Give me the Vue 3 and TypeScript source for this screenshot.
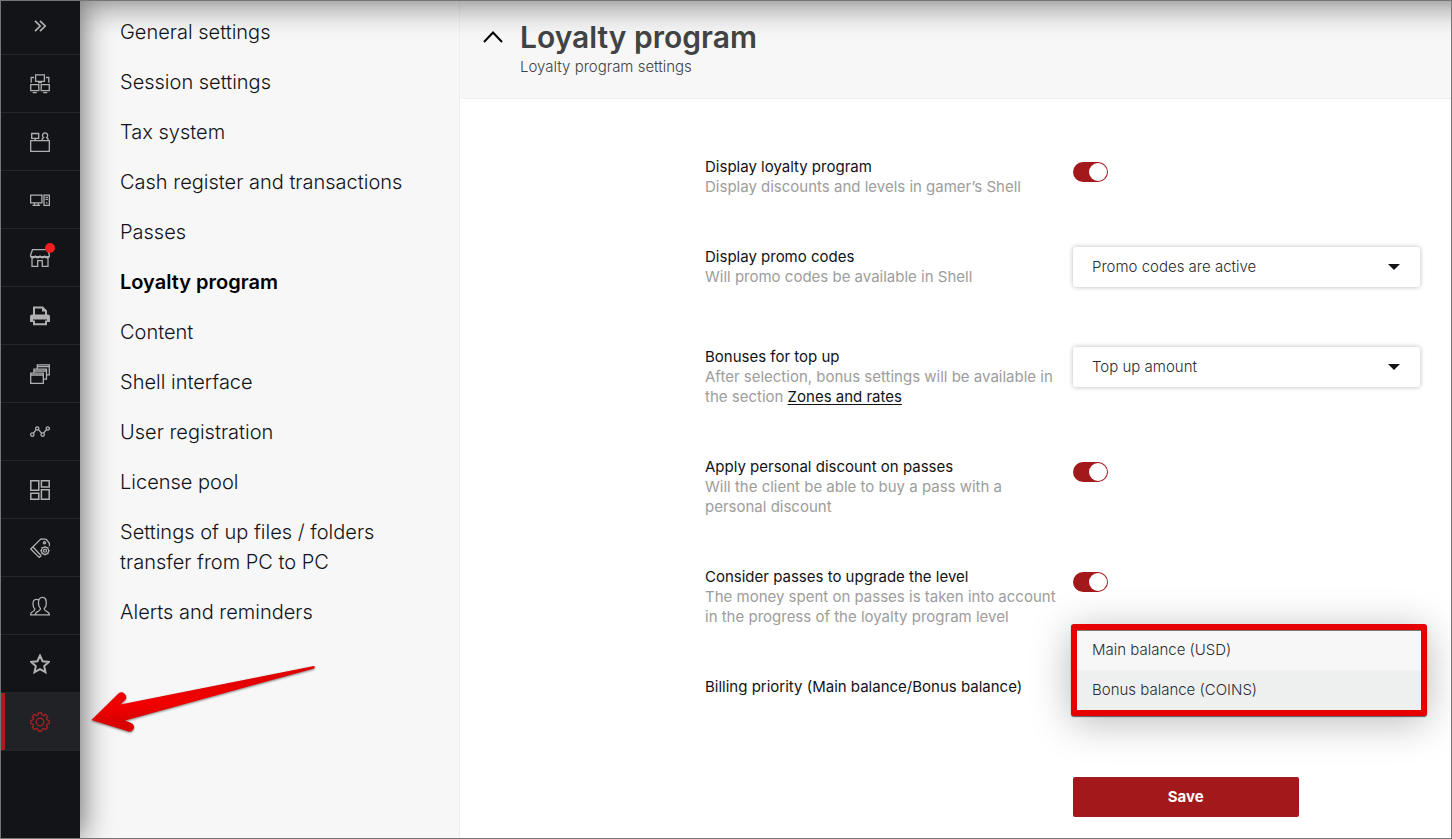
<script setup lang="ts">
import { ref } from 'vue'

interface RailItem {
  name: string
  line?: string
  solid?: string
  width?: number
  dot?: boolean
}

const rail: RailItem[] = [
  {
    name: 'Network map',
    line: 'M5.600.8h8.800v6.500H5.600zM8 8.600h4M1.200 8.800V3.500H4M18.800 8.800V3.500H16M.7 10.700h8.100v6H.7zM11.200 10.700h8.100v6h-8.100zM2.700 18.700h4.100M13.200 18.700h4.100',
  },
  {
    name: 'Reception',
    line: 'M.7 8.7h18.6v10.6H.7zM1.7 1.5h7v4.800h-7zM5.2 6.3v2.200M12.2 8.500V6.700l1.400-1.100a2.600 2.600 0 1 1 3 0L18 6.700v1.800',
  },
  {
    name: 'Computers',
    line: 'M.6 5.100h11.300v7.800H.6zM4.500 13v2M8.200 13v2M2.500 15.300h7.600M14 5.100h5.400v10.300H14zM15.500 7.400h2.400M15.500 9.400h2.400',
    solid: 'M16 12.300h1.400v1.200H16z',
  },
  {
    name: 'Shop',
    line: 'M2.500 1.700h15l1.800 5v2H.7v-2zM2 9v9.300h5.700v-5.600h4.600v5.600H18V9M.7 7.500c0 3 4.600 3 4.600 0 0 3 4.700 3 4.700 0 0 3 4.700 3 4.700 0 0 3 4.600 3 4.600 0',
    dot: true,
  },
  {
    name: 'Printing',
    line: 'M4 9V1.500h8.500L16 5v4M4 14.500v3.800h12v-3.800',
    solid: 'M12 1l4.600 4.500H12zM2 8.500h16a2 2 0 0 1 2 2V16h-3v-2.500H3V16H0v-5.500a2 2 0 0 1 2-2z',
    width: 2,
  },
  {
    name: 'Windows',
    line: 'M.7 9.200h12.600v10.100H.7zM.7 11h12.600M3.900 9V5.100h12.600v10h-3M4 7h12.500M7.300 5V.8h12v10.100h-2.800M7.300 2.600h12',
  },
  {
    name: 'Statistics',
    line: 'M3.400 11.300 6 7.700M8.300 7.400l3.200 3.800M13.700 11l2.900-3.600M.6 12.600a1.700 1.700 0 1 0 3.400 0 1.700 1.700 0 1 0-3.400 0M5.600 6.400a1.600 1.600 0 1 0 3.200 0 1.600 1.600 0 1 0-3.200 0M11 12.600a1.700 1.700 0 1 0 3.400 0 1.700 1.700 0 1 0-3.400 0M16.200 6.400a1.600 1.600 0 1 0 3.200 0 1.600 1.600 0 1 0-3.200 0',
  },
  {
    name: 'Dashboard',
    line: 'M.8.8h8v9.400h-8zM11.400.8h7.800v6.200h-7.800zM.8 13.200h8v6h-8zM11.400 9.800h7.800v9.400h-7.800z',
    width: 1.5,
  },
  {
    name: 'Discounts',
    line: 'M11.200 17.800 9.200 19.400.7 11 11 .9l5.300.4 3.200 4.200v2.700M3 9l8.200 8.800M13.400 4.700a1.100 1.100 0 1 0 2.200 0 1.100 1.100 0 1 0-2.200 0M13.500 12.700a1.500 1.500 0 1 0 3 0 1.500 1.500 0 1 0-3 0M11.400 12.700a3.600 3.600 0 1 0 7.200 0 3.600 3.600 0 1 0-7.200 0M15 7.900v1.200M15 16.300v1.200M10.200 12.700h1.200M18.600 12.700h1.200M11.600 9.300l.9.900M17.500 15.200l.9.900M11.600 16.100l.9-.9M17.500 10.200l.9-.9',
  },
  {
    name: 'Customers',
    line: 'M5.300 18.900h14.100c0-2.400-1-2.900-2.700-3.600-1.900-.7-2.600-1.100-2.400-2.900 1.500-1.200 2-3 2-5.100 0-4-.6-6-3.900-6S8.400 3.300 8.400 7.300c0 2.100.6 3.900 2 5.100.2 1.800-.5 2.200-2.400 2.900-1.700.7-2.700 1.200-2.700 3.600zM5.300 18.900H.6c0-2.200.8-2.800 2.300-3.400 1.500-.6 2.100-1 1.900-2.500C3.500 11.800 3 10.300 3 8.300 3 5 3.700 3.300 6.400 3.300c1 0 1.700.2 2.200.7',
  },
  {
    name: 'Favourites',
    line: 'M10 1.500l2.600 5.700 6.200.7-4.600 4.200 1.300 6.100-5.500-3.100-5.500 3.100 1.300-6.100L1.200 7.900l6.200-.7z',
    width: 2,
  },
]

const gear =
  'M8.400.8h3.200L12 2.600Q12.900 3.800 13.800 3.400L15.400 2.400 17.600 4.600 16.600 6.200Q16.200 7.100 17.400 8L19.200 8.400V11.600L17.400 12Q16.200 12.900 16.600 13.800L17.600 15.400 15.400 17.600 13.800 16.600Q12.900 16.200 12 17.400L11.600 19.200H8.400L8 17.400Q7.100 16.200 6.200 16.600L4.600 17.600 2.400 15.400 3.400 13.800Q3.800 12.900 2.600 12L.8 11.600V8.400L2.600 8Q3.800 7.100 3.400 6.200L2.400 4.600 4.600 2.400 6.200 3.400Q7.100 3.800 8 2.600zM6.200 10a3.800 3.800 0 1 0 7.600 0 3.800 3.800 0 1 0-7.600 0'

const sections: string[] = [
  'General settings',
  'Session settings',
  'Tax system',
  'Cash register and transactions',
  'Passes',
  'Loyalty program',
  'Content',
  'Shell interface',
  'User registration',
  'License pool',
  'Settings of up files / folders transfer from PC to PC',
  'Alerts and reminders',
]
const current = ref('Loyalty program')

const displayProgram = ref(true)
const promo = ref('Promo codes are active')
const bonus = ref('Top up amount')
const passDiscount = ref(true)
const passLevel = ref(true)
const balances: string[] = ['Main balance (USD)', 'Bonus balance (COINS)']
const priority = ref(balances[1])
</script>

<template>
  <div class="app">
    <nav class="rail" aria-label="Main">
      <button class="rail-toggle" type="button" aria-label="Expand menu">
        <svg class="icon" viewBox="0 0 20 20"><path stroke-width="1.700" d="M5 4.800l5.200 5.200L5 15.200M10 4.800l5.200 5.200-5.200 5.200" /></svg>
      </button>
      <a v-for="item in rail" :key="item.name" class="rail-item" href="#" :aria-label="item.name">
        <svg class="icon" viewBox="0 0 20 20">
          <path v-if="item.line" :d="item.line" :stroke-width="item.width ?? 1.3" />
          <path v-if="item.solid" class="solid" :d="item.solid" />
        </svg>
        <span v-if="item.dot" class="dot"></span>
      </a>
      <a class="rail-item rail-current" href="#" aria-label="Settings">
        <svg class="icon" viewBox="0 0 20 20"><path stroke-width="1.200" stroke-linejoin="round" :d="gear" /></svg>
      </a>
    </nav>

    <nav class="sections" aria-label="Settings">
      <a
        v-for="s in sections"
        :key="s"
        href="#"
        :class="{ chosen: s === current }"
        @click.prevent="current = s"
      >{{ s }}</a>
    </nav>

    <main class="panel">
      <header class="head">
        <button class="collapse" type="button" aria-label="Collapse">
          <svg viewBox="0 0 20 20"><path d="M1 15l9-9.500 9 9.500" /></svg>
        </button>
        <div>
          <h1>Loyalty program</h1>
          <p>Loyalty program settings</p>
        </div>
      </header>

      <form class="form" @submit.prevent>
        <div class="row">
          <div>
            <label for="display">Display loyalty program</label>
            <p>Display discounts and levels in gamer’s Shell</p>
          </div>
          <input id="display" v-model="displayProgram" class="switch" type="checkbox" />
        </div>

        <div class="row">
          <div>
            <label for="promo">Display promo codes</label>
            <p>Will promo codes be available in Shell</p>
          </div>
          <div class="field">
            <select id="promo" v-model="promo"><option>Promo codes are active</option></select>
            <svg class="caret" viewBox="0 0 12 6"><path d="M0 0h12L6 6z" /></svg>
          </div>
        </div>

        <div class="row">
          <div>
            <label for="bonus">Bonuses for top up</label>
            <p>After selection, bonus settings will be available in the section <a href="#">Zones and rates</a></p>
          </div>
          <div class="field">
            <select id="bonus" v-model="bonus"><option>Top up amount</option></select>
            <svg class="caret" viewBox="0 0 12 6"><path d="M0 0h12L6 6z" /></svg>
          </div>
        </div>

        <div class="row">
          <div>
            <label for="discount">Apply personal discount on passes</label>
            <p>Will the client be able to buy a pass with a personal discount</p>
          </div>
          <input id="discount" v-model="passDiscount" class="switch" type="checkbox" />
        </div>

        <div class="row">
          <div>
            <label for="level">Consider passes to upgrade the level</label>
            <p>The money spent on passes is taken into account in the progress of the loyalty program level</p>
          </div>
          <input id="level" v-model="passLevel" class="switch" type="checkbox" />
        </div>

        <div class="row">
          <span id="priority" class="label">Billing priority (Main balance/Bonus balance)</span>
          <div class="picker">
            <div class="menu" role="listbox" aria-labelledby="priority">
              <button
                v-for="b in balances"
                :key="b"
                type="button"
                role="option"
                :aria-selected="b === priority"
                @click="priority = b"
              >{{ b }}</button>
            </div>
          </div>
        </div>

        <div class="row">
          <button class="save" type="submit">Save</button>
        </div>
      </form>
    </main>

    <svg class="arrow" viewBox="0 0 228 72" aria-hidden="true">
      <defs>
        <linearGradient id="red" x1="0" y1="0" x2="0.2" y2="1">
          <stop offset="0.3" stop-color="#e00000" />
          <stop offset="0.6" stop-color="#f20000" />
          <stop offset="0.85" stop-color="#d80000" />
        </linearGradient>
      </defs>
      <path fill="url(#red)" d="M1.500 55 28.500 28.500a4.700 4.700 0 0 1 7 6L30.500 39.500 224 1q1.500 1 0 2.500L35 55.500l5.500 2.200a4.500 4.500 0 0 1-2 8.800z" />
    </svg>
  </div>
</template>

<style>
body {
  margin: 0;
}
</style>

<style scoped>
* {
  box-sizing: border-box;
}
.app {
  position: relative;
  display: grid;
  grid-template-columns: 79px 380px 1fr;
  min-height: 100vh;
  border: 1px solid #757575;
  overflow: hidden;
  background: #fff;
  font-family: Inter, "Noto Sans", sans-serif;
  font-size: 15px;
  line-height: 20px;
  color: #111317;
}
.app::after {
  content: "";
  position: absolute;
  z-index: 1;
  top: 0;
  left: 79px;
  right: 0;
  height: 40px;
  pointer-events: none;
  background: linear-gradient(rgba(0, 0, 0, 0.3), rgba(0, 0, 0, 0.17) 25%, rgba(0, 0, 0, 0.06) 55%, rgba(0, 0, 0, 0.01) 80%, transparent);
}
.rail {
  position: relative;
  z-index: 2;
  display: flex;
  flex-direction: column;
  background: #121418;
  box-shadow: 0 0 32px rgba(0, 0, 0, 0.65);
}
.rail-toggle {
  height: 54px;
  padding: 0 2px 4px 0;
  border: 0;
  border-bottom: 1px solid #23262a;
  background: none;
  color: #b0b0b1;
  cursor: pointer;
}
.rail-item {
  position: relative;
  display: flex;
  align-items: center;
  justify-content: center;
  height: 58px;
  padding-right: 1px;
  border-bottom: 1px solid #23262a;
  color: #b0b0b1;
}
.rail-current {
  background: #202226;
  box-shadow: inset 4px 0 #ab1c1f;
  color: #b52125;
}
.icon {
  display: block;
  width: 20px;
  height: 20px;
  margin: 0 auto;
  fill: none;
  stroke: currentColor;
}
.rail-item .icon {
  margin: 0;
}
.icon .solid {
  fill: currentColor;
  stroke: none;
}
.dot {
  position: absolute;
  top: 14px;
  right: 25px;
  width: 10px;
  height: 10px;
  border-radius: 50%;
  background: #f01f1f;
}
.sections {
  display: flex;
  flex-direction: column;
  gap: 20px;
  padding: 16px 48px 20px 40px;
  border-right: 1px solid #eee;
  background: #f7f7f7;
}
.sections a {
  color: #111317;
  font-size: 20px;
  font-weight: 300;
  line-height: 30px;
  text-decoration: none;
}
.sections .chosen {
  color: #000;
  font-weight: 600;
}
.head {
  display: flex;
  gap: 17px;
  padding: 16px 23px 21px;
  border-bottom: 1px solid #eee;
  border-radius: 0 0 0 4px;
  background: #f7f7f7;
}
.head h1 {
  margin: 0;
  color: #424344;
  font-size: 30px;
  font-weight: 600;
  line-height: 40px;
}
.head p {
  margin: 0;
  color: #424344;
  font-weight: 300;
}
.collapse {
  width: 20px;
  height: 40px;
  padding: 0;
  border: 0;
  background: none;
}
.collapse svg {
  display: block;
  width: 20px;
  fill: none;
  stroke: #000;
  stroke-width: 2;
}
.form {
  display: grid;
  gap: 50px;
  padding: 58px 31px 21px 245px;
}
.row {
  display: grid;
  grid-template-columns: 359fr 347fr;
  gap: 9px;
  align-items: start;
}
.row label,
.label {
  display: block;
}
.row p {
  margin: 0;
  color: #9d9d9d;
}
.row p a {
  color: #111317;
  text-underline-offset: 2px;
}
.switch {
  appearance: none;
  width: 35px;
  height: 20px;
  margin: 5px 0 0;
  padding: 1px;
  border-radius: 10px;
  background: #aaa;
}
.switch::before {
  content: "";
  display: block;
  width: 18px;
  height: 18px;
  border-radius: 50%;
  background: #fff;
}
.switch:checked {
  background: #a3181b;
}
.switch:checked::before {
  margin-left: auto;
}
.field {
  position: relative;
  margin-bottom: 10px;
}
.field select {
  appearance: none;
  display: block;
  width: 100%;
  height: 40px;
  padding: 0 40px 0 19px;
  border: 0;
  border-radius: 3px;
  background: #fff;
  box-shadow: 0 0 5px rgba(0, 0, 0, 0.28);
  color: #2a2c30;
  font: inherit;
  font-weight: 300;
}
.caret {
  position: absolute;
  top: 17px;
  right: 20px;
  width: 12px;
  height: 6px;
  fill: #111317;
  pointer-events: none;
}
.picker {
  position: relative;
  height: 50px;
}
.menu {
  position: absolute;
  top: -53px;
  left: -2px;
  right: -7px;
  border: 6px solid #e60000;
  border-radius: 3px;
  background: #f7f7f7;
  box-shadow: 0 1px 1px rgba(0, 0, 0, 0.6), 0 6px 40px rgba(0, 0, 0, 0.28), inset 0 1px #777;
}
.menu button {
  display: block;
  width: 100%;
  height: 40px;
  padding: 0 15px;
  border: 0;
  background: none;
  color: #2a2c30;
  font: inherit;
  font-weight: 300;
  text-align: left;
}
.menu [aria-selected="true"] {
  background: #eef0ef;
}
.save {
  grid-column: 2;
  width: 65%;
  height: 40px;
  border: 0;
  border-radius: 2px;
  background: #a3181b;
  color: #fff;
  font: inherit;
  font-weight: 700;
}
.arrow {
  position: absolute;
  z-index: 3;
  top: 664px;
  left: 89px;
  width: 228px;
  height: 72px;
  filter: drop-shadow(0 1px 1px rgba(0, 0, 0, 0.5));
  pointer-events: none;
}
</style>
